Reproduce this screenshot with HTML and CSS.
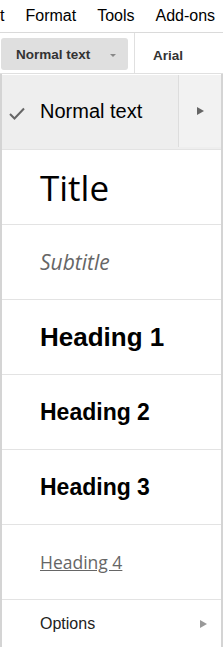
FILE: index.html
```html
<!DOCTYPE html>
<html lang="en">
<head>
    <meta charset="UTF-8">
    <title>Docs - Styles menu</title>
    <link rel="stylesheet" href="styles.css">
</head>
<body>
    <div class="menubar">
        <div class="menu-item">t</div>
        <div class="menu-item">Format</div>
        <div class="menu-item">Tools</div>
        <div class="menu-item">Add-ons</div>
    </div>
    <div class="toolbar">
        <div class="style-select">
            <span class="style-label">Normal text</span>
            <span class="select-caret"></span>
        </div>
        <div class="toolbar-sep"></div>
        <div class="font-select">Arial</div>
    </div>
    <div class="style-menu">
        <div class="style-row active">
            <div class="style-main">
                <svg class="check" width="16" height="13" viewBox="0 0 16 13">
                    <path d="M1 7 L5.5 11.5 L15 1.5" fill="none" stroke="#666" stroke-width="2"/>
                </svg>
                <span class="style-normal">Normal text</span>
            </div>
            <div class="style-sub"><span class="sub-arrow"></span></div>
        </div>
        <div class="style-row"><span class="style-title">Title</span></div>
        <div class="style-row"><span class="style-subtitle">Subtitle</span></div>
        <div class="style-row"><span class="style-h1">Heading 1</span></div>
        <div class="style-row"><span class="style-h2">Heading 2</span></div>
        <div class="style-row"><span class="style-h2">Heading 3</span></div>
        <div class="style-row"><span class="style-h4">Heading 4</span></div>
        <div class="style-row options">
            <span class="style-options">Options</span>
            <span class="sub-arrow light"></span>
        </div>
    </div>
</body>
</html>
```

FILE: styles.css
```css
body {
    margin: 0;
    padding: 0;
    font-family: 'Liberation Sans', Arial, sans-serif;
    background-color: #FFFFFF;
    color: #000000;
    width: 223px;
    height: 647px;
    overflow: hidden;
}
.menubar {
    height: 33px;
    display: flex;
    gap: 21px;
    align-items: center;
    font-size: 16px;
    border-bottom: 1px solid #DADADA;
    padding-bottom: 1px;
    box-sizing: border-box;
}
.menu-item {
    white-space: nowrap;
}
.toolbar {
    height: 40px;
    display: flex;
    align-items: flex-start;
    border-bottom: 1px solid #E0E0E0;
}
.style-select {
    margin: 5px 0 0 1px;
    width: 127px;
    height: 32px;
    background-color: #DFDFDF;
    border-radius: 3px;
    display: flex;
    align-items: center;
    padding-left: 15px;
    box-sizing: border-box;
}
.style-label,
.font-select {
    font-size: 13.5px;
    font-weight: bold;
    color: #333333;
}
.select-caret {
    margin-left: 20px;
    margin-top: 2px;
    border-left: 3px solid transparent;
    border-right: 3px solid transparent;
    border-top: 3px solid #888888;
}
.toolbar-sep {
    width: 1px;
    height: 40px;
    margin-left: 6px;
    background-color: #E0E0E0;
}
.font-select {
    margin: 15px 0 0 18px;
}
.style-menu {
    border-left: 2px solid #D4D4D4;
    border-right: 2px solid #D4D4D4;
    padding-top: 1px;
    display: flex;
    flex-direction: column;
}
.style-row {
    height: 74px;
    border-bottom: 1px solid #E3E3E3;
    display: flex;
    align-items: center;
    padding-left: 38px;
}
.style-row.active {
    padding-left: 0;
    background-color: #EEEEEE;
    align-items: stretch;
}
.style-main {
    width: 176px;
    display: flex;
    align-items: center;
    border-right: 1px solid #DDDDDD;
    margin-bottom: 2px;
}
.check {
    margin: 4px 0 0 7px;
    width: 16px;
}
.style-normal {
    margin-left: 15px;
    font-size: 20px;
}
.style-sub {
    flex: 1;
    background-color: #F2F2F2;
    display: flex;
    align-items: center;
    justify-content: center;
    margin-bottom: 2px;
}
.sub-arrow {
    border-top: 4px solid transparent;
    border-bottom: 4px solid transparent;
    border-left: 7px solid #666666;
    margin-left: 1px;
}
.sub-arrow.light {
    border-left-color: #999999;
    margin-left: auto;
    margin-right: 14px;
}
.style-title {
    font-family: 'Open Sans', sans-serif;
    font-size: 35px;
}
.style-subtitle {
    font-family: 'Open Sans', sans-serif;
    font-style: italic;
    font-size: 21px;
    color: #666666;
}
.style-h1 {
    font-weight: bold;
    font-size: 26px;
}
.style-h2 {
    font-weight: bold;
    font-size: 23px;
}
.style-h4 {
    font-family: 'Open Sans', sans-serif;
    font-size: 17.5px;
    color: #666666;
    text-decoration: underline;
}
.style-row.options {
    height: 48px;
    border-bottom: none;
}
.style-options {
    font-size: 16px;
    color: #222222;
}
```
